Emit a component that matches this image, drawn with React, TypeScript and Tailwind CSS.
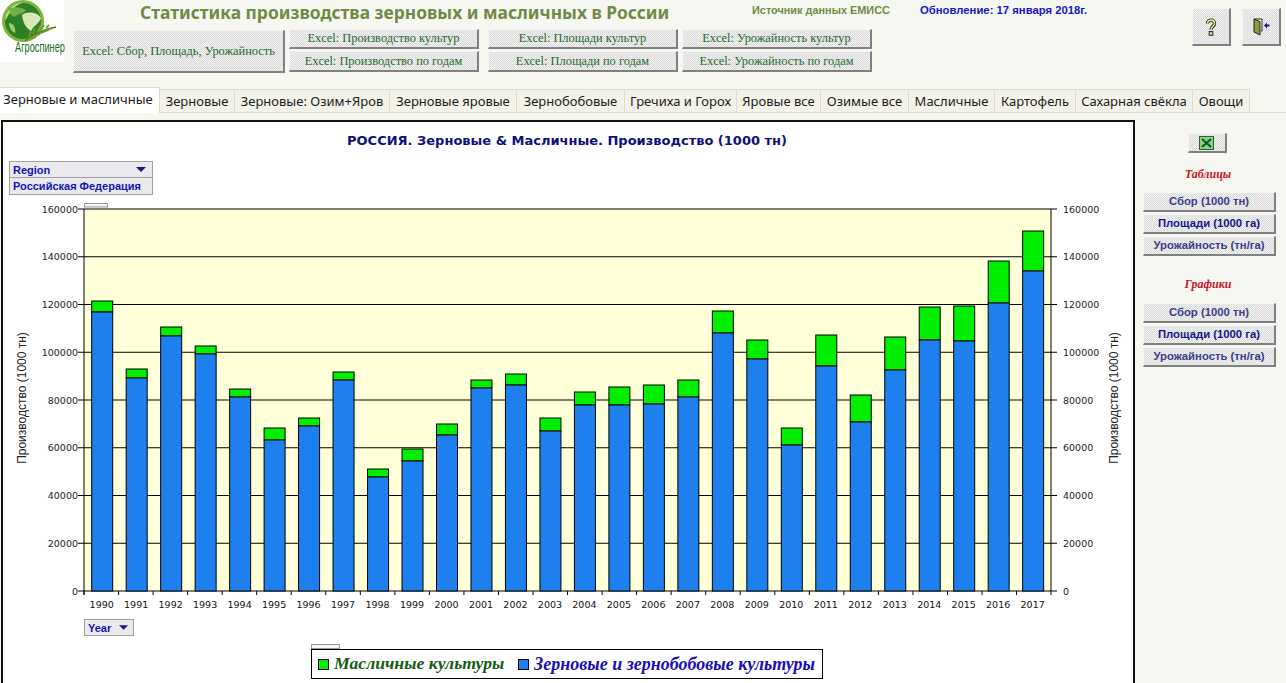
const yearsData: [number, number, number][] = [
  [1990, 301, 312], [1991, 369, 378], [1992, 327, 336], [1993, 346, 354], [1994, 389, 397], [1995, 428, 440], [1996, 418, 426],
  [1997, 372, 380], [1998, 469, 477], [1999, 449, 461], [2000, 424, 435], [2001, 380, 388], [2002, 374, 385], [2003, 418, 431],
  [2004, 392, 405], [2005, 387, 405], [2006, 385, 404], [2007, 380, 397], [2008, 311, 333], [2009, 340, 359], [2010, 428, 445],
  [2011, 335, 366], [2012, 395, 422], [2013, 337, 370], [2014, 307, 340], [2015, 306, 341], [2016, 261, 303], [2017, 231, 271],
];

const tabs: [string, string][] = [
  ["Зерновые", "w-[75px]"], ["Зерновые: Озим+Яров", "w-[155px]"], ["Зерновые яровые", "w-[127px]"], ["Зернобобовые", "w-[108px]"],
  ["Гречиха и Горох", "w-[112px]"], ["Яровые все", "w-[84px]"], ["Озимые все", "w-[88px]"], ["Масличные", "w-[86px]"],
  ["Картофель", "w-[81px]"], ["Сахарная свёкла", "w-[117px]"], ["Овощи", "w-[57px]"],
];

const bevel = "border-t border-l border-t-[#f4f4f4] border-l-[#f4f4f4] border-r-2 border-b-2 border-r-[#808080] border-b-[#808080] bg-[repeating-conic-gradient(#dcdcdc_0_25%,#efefef_0_50%)] bg-[length:2px_2px]";

function ExcelBtn({ label, cls }: { label: string; cls: string }) {
  return (
    <button className={`${bevel} ${cls} flex items-center justify-center font-['Liberation_Serif',serif] text-[12.4px] leading-none text-[#1f6a2c] whitespace-nowrap`}>
      {label}
    </button>
  );
}

function SideBtn({ label, strong }: { label: string; strong?: boolean }) {
  return (
    <button className={`${bevel} w-[133px] h-[20px] flex items-center justify-center font-['Liberation_Sans',sans-serif] text-[11.3px] font-bold leading-none ${strong ? "text-[#14148c]" : "text-[#3c3c8c]"}`}>
      {label}
    </button>
  );
}

function Logo() {
  return (
    <div className="relative w-[64px] h-[62px] bg-white shrink-0">
      <svg width="64" height="48" viewBox="0 0 64 48" className="block">
        <circle cx="23" cy="21" r="21" fill="#7fb33a" />
        <circle cx="23" cy="21" r="18" fill="#2f7f26" />
        <path d="M5 21 A18 18 0 0 1 23 3 A22 22 0 0 0 9 14 Z" fill="#bfe08a" />
        <path d="M9 9 C15 6 22 7 26 10 C24 14 19 13 16 16 C13 18 10 15 9 9 Z" fill="#6fb04a" />
        <path d="M22 15 C28 11 37 12 41 18 C39 24 35 24 31 31 C26 28 23 23 22 15 Z" fill="#d6e8b4" />
        <path d="M9 23 C13 23 16 27 15 33 C12 32 9 28 9 23 Z" fill="#9cc866" />
        <path d="M25 41 C32 35 42 30 56 27" fill="none" stroke="#557f22" strokeWidth="1.4" />
        <path d="M29 37 l2 -6 M33 34 l2 -6 M37 32 l3 -6 M41 30 l3 -5 M46 28 l3 -3 M30 39 l6 -2 M34 36 l6 -2 M38 34 l6 -2 M43 32 l6 -2 M48 29 l5 -1" stroke="#6f9a2e" strokeWidth="1.8" />
      </svg>
      <div className="absolute left-[15px] top-[40px] font-['Liberation_Sans',sans-serif] text-[14px] leading-[15px] text-[#176b1f] whitespace-nowrap scale-x-[0.66] origin-left">
        Агроспинер
      </div>
    </div>
  );
}

function Chart() {
  const ticks = [0, 20000, 40000, 60000, 80000, 100000, 120000, 140000, 160000];
  const y = (v: number) => 591 - (v / 160000) * 382;
  return (
    <svg width="1130" height="420" viewBox="3 195 1130 420" className="block" fontFamily="'DejaVu Sans', sans-serif" fontSize="9.5" fill="#222">
      <rect x="84" y="209" width="967" height="382" fill="#ffffd8" />
      {ticks.map((t) => (
        <g key={t}>
          <line x1="78" x2="1057" y1={y(t)} y2={y(t)} stroke="#000" strokeWidth="1" />
          <text x="78" y={y(t) + 3.5} textAnchor="end">{t}</text>
          <text x="1063" y={y(t) + 3.5}>{t}</text>
        </g>
      ))}
      <line x1="84" x2="84" y1="209" y2="595" stroke="#000" />
      <line x1="1051" x2="1051" y1="209" y2="595" stroke="#000" />
      {yearsData.map(([yr, top, split], i) => {
        const bx = 91.7 + 34.48 * i;
        return (
          <g key={yr}>
            <rect x={bx} y={top} width="21" height={split - top} fill="#00ee00" stroke="#000" strokeWidth="1" />
            <rect x={bx} y={split} width="21" height={591 - split} fill="#1e80ee" stroke="#000" strokeWidth="1" />
            <line x1={84 + 34.54 * i} x2={84 + 34.54 * i} y1="591" y2="595" stroke="#000" />
            <text x={101.7 + 34.48 * i} y="608" textAnchor="middle" fontSize="9.5" fill="#111">{yr}</text>
          </g>
        );
      })}
      <rect x="84.5" y="203.5" width="23" height="3.5" fill="#f4f4f4" stroke="#999" strokeWidth="1" />
      <text transform="translate(26 398) rotate(-90)" textAnchor="middle" fontSize="12" fontFamily="'Liberation Sans', sans-serif">Производство (1000 тн)</text>
      <text transform="translate(1118 398) rotate(-90)" textAnchor="middle" fontSize="12" fontFamily="'Liberation Sans', sans-serif">Производство (1000 тн)</text>
    </svg>
  );
}

export default function App() {
  return (
    <div className="w-[1286px] h-[683px] overflow-hidden bg-[#f7f7f1]">
      <header className="flex h-[87px]">
        <Logo />
        <div className="w-[1112px] shrink-0">
          <div className="flex h-[29px]">
            <h1 className="ml-[76px] w-[612px] shrink-0 pt-[1px] font-['Noto_Sans',sans-serif] text-[17.4px] leading-[22px] font-bold text-[#6f8a44] whitespace-nowrap">
              Статистика производства зерновых и масличных в России
            </h1>
            <span className="w-[168px] shrink-0 pt-[3px] font-['Liberation_Sans',sans-serif] text-[10.9px] leading-[14px] font-bold text-[#6f8a44] whitespace-nowrap">Источник данных ЕМИСС</span>
            <span className="pt-[3px] font-['Liberation_Sans',sans-serif] text-[11.3px] leading-[14px] font-bold text-[#1616c8] whitespace-nowrap">Обновление: 17 января 2018г.</span>
          </div>
          <div className="flex ml-[9px] gap-[4px]">
            <ExcelBtn label="Excel: Сбор, Площадь, Урожайность" cls="w-[212px] h-[43px] mt-[1px]" />
            <div className="flex flex-col gap-[2px] mr-[5px]">
              <ExcelBtn label="Excel: Производство культур" cls="w-[190px] h-[20px]" />
              <ExcelBtn label="Excel: Производство по годам" cls="w-[190px] h-[21px]" />
            </div>
            <div className="flex flex-col gap-[2px]">
              <ExcelBtn label="Excel: Площади культур" cls="w-[190px] h-[20px]" />
              <ExcelBtn label="Excel: Площади по годам" cls="w-[190px] h-[21px]" />
            </div>
            <div className="flex flex-col gap-[2px]">
              <ExcelBtn label="Excel: Урожайность культур" cls="w-[190px] h-[20px]" />
              <ExcelBtn label="Excel: Урожайность по годам" cls="w-[190px] h-[21px]" />
            </div>
          </div>
        </div>
        <div className="flex gap-[11px] ml-[16px] pt-[8px] items-start">
          <button className={`${bevel} w-[39px] h-[38px] flex items-center justify-center`} aria-label="help">
            <svg width="12" height="18" viewBox="0 0 12 18">
              <path d="M2.5 5.5 C2.5 1 9.5 1 9.5 5.5 C9.5 8.5 6 8.5 6 11.5" fill="none" stroke="#222" strokeWidth="3.4" />
              <path d="M2.5 5.5 C2.5 1 9.5 1 9.5 5.5 C9.5 8.5 6 8.5 6 11.5" fill="none" stroke="#e8e68a" strokeWidth="1.6" />
              <rect x="4.2" y="13.6" width="3.6" height="3.6" fill="#e8e68a" stroke="#222" />
            </svg>
          </button>
          <button className={`${bevel} w-[39px] h-[38px] flex items-center justify-center`} aria-label="exit">
            <svg width="17" height="18" viewBox="0 0 17 18">
              <path d="M1 1 H9 V13 H8" fill="#fff" stroke="#222" />
              <path d="M1 1 L7 3.5 V17 L1 14 Z" fill="#8f9a38" stroke="#222" />
              <path d="M11 7.5 L14 4.5 V6.5 H16.5 V8.5 H14 V10.5 Z" fill="#14148c" />
            </svg>
          </button>
        </div>
      </header>

      <nav className="flex items-end h-[26px] border-b border-[#dcdcd2] font-['Noto_Sans',sans-serif] text-[13px] leading-none text-[#1c1c1c]">
        <div className="w-[160px] h-[26px] -mb-px bg-white border-t border-r border-[#dcdcd2] flex items-center justify-center whitespace-nowrap pb-[3px] pr-[3px]">
          Зерновые и масличные
        </div>
        {tabs.map(([t, w]) => (
          <div key={t} className={`${w} h-[23px] bg-[#f2f2e9] border-t border-r border-[#dcdcd2] flex items-center justify-center whitespace-nowrap`}>
            {t}
          </div>
        ))}
      </nav>

      <main className="flex mt-[7px]">
        <section className="ml-px w-[1134px] h-[600px] shrink-0 bg-white border-2 border-[#111]">
          <h2 className="h-[39px] pt-[11px] text-center pr-[2px] font-['DejaVu_Sans',sans-serif] text-[13px] leading-[16px] font-bold text-[#10107c]">
            РОССИЯ. Зерновые &amp; Масличные. Производство (1000 тн)
          </h2>
          <div className="ml-[6px] w-[144px] h-[34px] border border-[#a0a0a0] bg-[#e9e9ee] font-['Liberation_Sans',sans-serif] text-[11px] font-bold text-[#1414b4]">
            <div className="h-[16px] border-b border-[#a0a0a0] flex items-center justify-between pl-[3px] pr-[6px] pt-px leading-none">
              <span>Region</span>
              <svg width="10" height="6" viewBox="0 0 10 6"><path d="M0 0 H10 L5 5 Z" fill="#14148c" /></svg>
            </div>
            <div className="h-[16px] flex items-center pl-[3px] leading-none whitespace-nowrap">Российская Федерация</div>
          </div>
          <Chart />
          <div className="ml-[81px] mt-[4px] w-[50px] h-[17px] border border-[#a0a0a0] bg-[#e9e9ee] flex items-center justify-between pl-[3px] pr-[5px] pt-px font-['Liberation_Sans',sans-serif] text-[11px] font-bold leading-none text-[#1414b4]">
            <span>Year</span>
            <svg width="9" height="6" viewBox="0 0 10 6"><path d="M0 0 H10 L5 5 Z" fill="#14148c" /></svg>
          </div>
          <div className="ml-[308px] mt-[8px] w-[29px] h-[5px] border border-[#999] bg-[#f4f4f4]" />
          <div className="ml-[308px] w-[512px] h-[30px] border border-black flex items-center pl-[6px] font-['Liberation_Serif',serif] font-bold italic leading-none whitespace-nowrap">
            <span className="w-[11px] h-[11px] bg-[#00ee00] border border-black mr-[5px]" />
            <span className="text-[#145c14] text-[17.7px] w-[184px] shrink-0">Масличные культуры</span>
            <span className="w-[11px] h-[11px] bg-[#1e80ee] border border-black mr-[5px]" />
            <span className="text-[#1a0fb4] text-[18px]">Зерновые и зернобобовые культуры</span>
          </div>
        </section>
        <aside className="flex-1 flex flex-col items-center pr-[2px]">
          <button className={`${bevel} w-[39px] h-[20px] mt-[13px] -ml-[5px] flex items-center justify-center`} aria-label="excel">
            <svg width="15" height="14" viewBox="0 0 15 14">
              <rect x="0.5" y="0.5" width="14" height="13" fill="#8ccf8c" stroke="#1f6a2c" />
              <path d="M3 3 L12 11 M12 3 L3 11" stroke="#14541f" strokeWidth="2" />
            </svg>
          </button>
          <div className="mt-[14px] -ml-[3px] h-[14px] font-['Liberation_Serif',serif] text-[12px] font-bold italic leading-[14px] text-[#c81428]">Таблицы</div>
          <div className="mt-[11px] flex flex-col gap-[2px]">
            <SideBtn label="Сбор (1000 тн)" />
            <SideBtn label="Площади (1000 га)" strong />
            <SideBtn label="Урожайность (тн/га)" />
          </div>
          <div className="mt-[21px] -ml-[3px] h-[14px] font-['Liberation_Serif',serif] text-[12px] font-bold italic leading-[14px] text-[#c81428]">Графики</div>
          <div className="mt-[12px] flex flex-col gap-[2px]">
            <SideBtn label="Сбор (1000 тн)" />
            <SideBtn label="Площади (1000 га)" strong />
            <SideBtn label="Урожайность (тн/га)" />
          </div>
        </aside>
      </main>
    </div>
  );
}
